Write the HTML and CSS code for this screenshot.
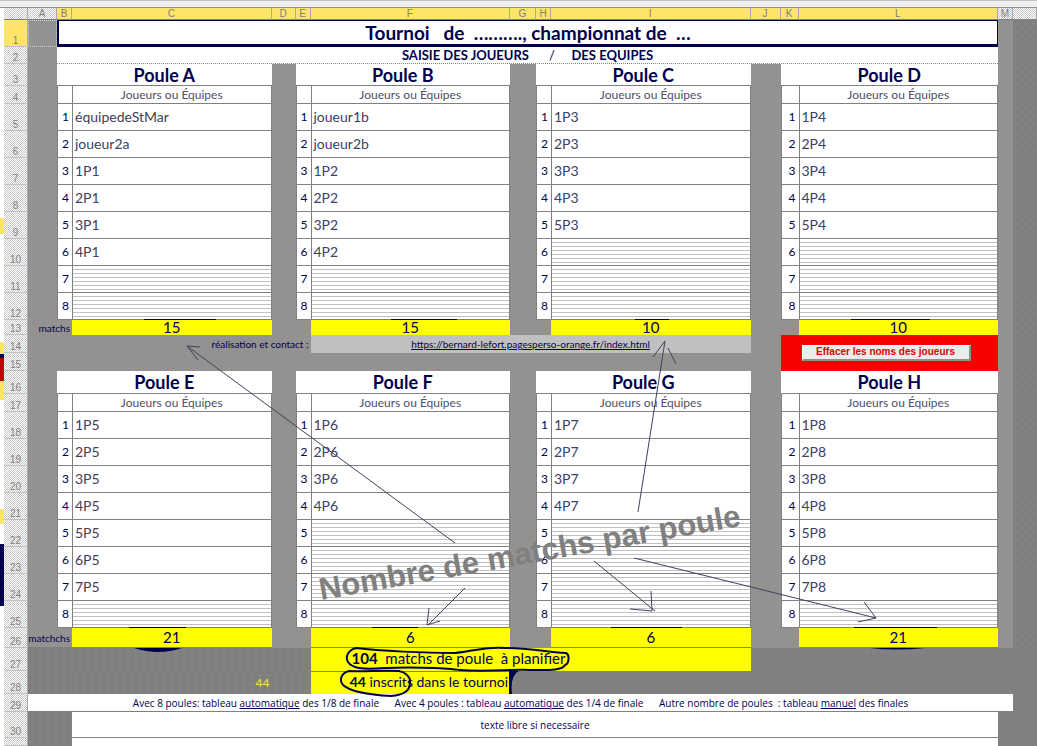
FILE: index.html
```html
<!DOCTYPE html>
<html lang="fr">
<head>
    <meta charset="UTF-8">
    <meta name="viewport" content="width=device-width, initial-scale=1.0">
    <title>Tournoi</title>
    <link rel="stylesheet" href="styles.css">
</head>
<body>
    <div class="page">
        <div class="ribbon"></div>
        <div class="window">
            <div class="edge"></div>
            <table class="sheet">
                <colgroup>
                    <col class="col-head">
                    <col class="col-a">
                    <col class="col-num"><col><col class="col-d">
                    <col class="col-num"><col><col class="col-g">
                    <col class="col-num"><col><col class="col-j">
                    <col class="col-k"><col>
                    <col class="col-m"><col class="col-n">
                </colgroup>
                <thead>
                    <tr class="letters">
                        <th></th><th>A</th>
                        <th class="on">B</th><th class="on">C</th><th class="on">D</th>
                        <th class="on">E</th><th class="on">F</th><th class="on">G</th>
                        <th class="on">H</th><th class="on">I</th><th class="on">J</th>
                        <th class="on">K</th><th class="on">L</th>
                        <th>M</th><th></th>
                    </tr>
                </thead>
                <tbody>
                    <tr class="row-title">
                        <th class="on">1</th><td class="copied"></td>
                        <td class="title" colspan="11">Tournoi   de  ………., championnat de  …</td>
                        <td></td><td class="outside"></td>
                    </tr>
                    <tr class="row-subtitle">
                        <th>2</th><td></td>
                        <td class="subtitle" colspan="11"><b>SAISIE DES JOUEURS</b>      /     <b>DES EQUIPES</b></td>
                        <td></td><td class="outside"></td>
                    </tr>
                </tbody>
                <tbody id="top"></tbody>
                <tbody>
                    <tr class="row-link">
                        <th>14</th><td></td><td></td>
                        <td class="label" colspan="3">réalisation et contact :</td>
                        <td class="link" colspan="4"><a href="https://bernard-lefort.pagesperso-orange.fr/index.html">https://bernard-lefort.pagesperso-orange.fr/index.html</a></td>
                        <td></td>
                        <td class="danger" colspan="2" rowspan="2"><button type="button" id="clear">Effacer les noms des joueurs</button></td>
                        <td></td><td class="outside"></td>
                    </tr>
                    <tr class="row-link">
                        <th>15</th><td colspan="10"></td>
                        <td></td><td class="outside"></td>
                    </tr>
                </tbody>
                <tbody id="bottom"></tbody>
                <tbody class="summary">
                    <tr class="row-total">
                        <th>27</th><td colspan="5"></td>
                        <td class="total planned" colspan="4"><b>104</b>  matchs de poule  à planifier</td>
                        <td colspan="5"></td>
                    </tr>
                    <tr class="row-total">
                        <th>28</th><td colspan="2"></td>
                        <td class="count">44</td><td colspan="2"></td>
                        <td class="total entered"><b>44</b> inscrits dans le tournoi</td>
                        <td colspan="8"></td>
                    </tr>
                    <tr class="row-help">
                        <th>29</th>
                        <td class="help" colspan="13">Avec 8 poules: tableau <u>automatique</u> des 1/8 de finale      Avec 4 poules : tableau <u>automatique</u> des 1/4 de finale      Autre nombre de poules  : tableau <u>manuel</u> des finales</td>
                        <td></td>
                    </tr>
                    <tr class="row-free">
                        <th>30</th><td colspan="2"></td>
                        <td class="help" colspan="10">texte libre si necessaire</td>
                        <td colspan="2"></td>
                    </tr>
                    <tr class="row-last">
                        <th></th><td colspan="2"></td><td class="blank" colspan="10"></td><td colspan="2"></td>
                    </tr>
                </tbody>
            </table>
        </div>

        <svg class="notes" viewBox="0 0 1037 746" preserveAspectRatio="xMinYMin meet">
            <text class="wordart" transform="translate(321 600) rotate(-10)">Nombre de matchs par poule</text>
            <g class="arrows">
                <path d="M455 543L187 346M200 347L187 346L198 360"/>
                <path d="M638 512L665 341L653 357M668 348L676 364"/>
                <path d="M465 588L428 625M429 608L427 625L440 621"/>
                <path d="M594 561L655 611M651 591L652 611L630 609"/>
                <path d="M634 558L876 618M864 602L876 618L858 622"/>
            </g>
            <g class="rings">
                <path d="M356 648C348 650 345 657 348 662C352 668 361 670 385 668C415 667 440 668 460 670C485 672 515 669 530 670C547 670 562 671 565 665C569 664 570 655 566 653C545 652 525 647 505 648C485 646 470 652 455 653C425 653 380 651 356 648Z"/>
                <path d="M349 671C341 673 339 680 343 685C351 692 372 695 391 696C404 695 410 690 410 683C411 677 405 672 399 671C382 670 363 672 349 671Z"/>
            </g>
            <g class="arcs">
                <path d="M144 319.500H216M391 319.500H457M635 319.500H669M851 319.500H930M129 627.500H186M372 627.500H418M611 627.500H682M854 627.500H937"/>
                <path class="dome" d="M134 648H182Q158 656 134 648ZM870 648H925Q895 651 870 648ZM509 671H519Q510 675 512 694H509Z"/>
            </g>
        </svg>
    </div>
    <script src="script.js"></script>
</body>
</html>
```

FILE: styles.css
```css
:root {
    --navy: #00004f;
    --line: #808080;
    --grey: #949290;
    --yellow: #ffff00;
    --head: #fee468;
}

body {
    margin: 0;
    background: #fff;
    color: var(--navy);
    font-family: Lato, "Open Sans", sans-serif;
}

.page {
    position: relative;
    overflow: hidden;
}

.ribbon {
    height: 4px;
    border-top: 1px solid #c0c0c0;
    border-bottom: 1px solid #909090;
    padding-bottom: 2px;
    background: #f0f0f0;
}

.window {
    display: flex;
}

/* sliver of the sheet behind */
.edge {
    flex: none;
    width: 4px;
    background: linear-gradient(#fff 210px, var(--head) 210px 226px, #fff 226px 334px,
        var(--head) 334px 346px, var(--navy) 346px 350px, #c00000 350px 373px,
        var(--head) 373px 392px, #fff 392px 501px, var(--head) 501px 516px, #fff 516px 536px,
        var(--navy) 536px 598px, #fff 598px);
}

.sheet {
    flex: 1;
    width: 0;
    table-layout: fixed;
    border-collapse: separate;
    border-spacing: 0;
    background: var(--grey);
}

.col-head, .col-d, .col-n { width: 24px; }
.col-a { width: 29px; }
.col-num, .col-m { width: 15px; }
.col-g { width: 26px; }
.col-j { width: 30px; }
.col-k { width: 18px; }

td, th {
    box-sizing: border-box;
    padding: 0;
    white-space: pre;
}

th {
    background: repeating-conic-gradient(#c8c8c8 0 25%, #fff 0 50%) 0 0 / 2px 2px;
    border-right: 1px solid #a8a8a8;
    border-bottom: 1px solid #c0c0c0;
    color: var(--line);
    font: 10px/10px "Liberation Sans", sans-serif;
    vertical-align: bottom;
}

th.on {
    background: var(--head);
}

.letters th {
    height: 12px;
    border-bottom-color: var(--line);
}

.outside,
.summary td {
    background: radial-gradient(#888 1px, transparent 1px) 0 0 / 8px 8px #808080;
}

.row-title { height: 27px; }
.row-subtitle { height: 17px; }
.row-name { height: 22px; }
.row-kind { height: 18px; }
.row-player { height: 27px; }
.row-matches { height: 15px; }
.row-link { height: 18px; }
#bottom .row-name { height: 23px; }
#bottom .row-matches { height: 20px; }
.row-total { height: 23px; }
.row-help { height: 18px; }
.row-free { height: 26px; }
.row-last { height: 8px; }

.copied {
    border: 1px dotted #d0d0d0;
}

.title {
    background: #fff;
    border: 1px solid var(--navy);
    border-left-width: 2px;
    border-bottom-width: 3px;
    font-size: 19px;
    line-height: 22px;
    font-weight: bold;
    text-align: center;
}

.subtitle {
    background: #fff;
    border-bottom: 1px dotted var(--line);
    font-size: 13px;
    line-height: 16px;
    text-align: center;
}

.name, .kind, .num, .player {
    background: #fff;
    border-bottom: 1px solid var(--line);
}

.name {
    font-size: 18px;
    line-height: 20px;
    font-weight: bold;
    text-align: center;
}

.kind, .num, .player {
    border-left: 1px solid var(--line);
}

.kind, .player {
    border-right: 1px solid var(--line);
}

.kind {
    color: #505068;
    font-size: 12px;
    line-height: 16px;
    text-align: center;
}

.num {
    padding-right: 3px;
    font-size: 12px;
    line-height: 16px;
    text-align: right;
}

.player {
    padding-left: 2px;
    color: #404060;
    font-size: 14px;
    line-height: 18px;
}

.empty {
    background: repeating-linear-gradient(#fff 0 3px, #c0c0c0 3px 4px);
}

.matches {
    background: var(--yellow);
    font-size: 15px;
    line-height: 15px;
    text-align: center;
}

#bottom .matches,
#bottom .row-matches .label {
    border-bottom: 1px solid var(--line);
}

.label {
    padding-right: 2px;
    font-size: 10px;
    line-height: 14px;
    text-align: right;
}

.link {
    background: #c0c0c0;
    font-size: 10px;
    line-height: 16px;
    text-align: center;
}

.link a {
    color: var(--navy);
}

.danger {
    padding: 0 0 1px 21px;
    background: #f80000;
}

.danger button {
    display: block;
    width: 169px;
    height: 16px;
    padding: 0;
    border: 1px solid #fff;
    border-right: 2px solid #909090;
    border-bottom: 2px solid #909090;
    background: #ececec;
    color: #e00000;
    font: bold 10px/12px "Liberation Sans", sans-serif;
}

.summary .total {
    background: var(--yellow);
    font-size: 15px;
    line-height: 18px;
}

.summary .planned {
    padding: 0 0 3px 41px;
}

.summary .entered {
    border-top: 1px solid var(--line);
    padding: 0 2px 3px 0;
    font-size: 14px;
    text-align: right;
}

.summary .count {
    padding-right: 2px;
    color: #f0e050;
    font-size: 12px;
    line-height: 18px;
    text-align: right;
}

.summary .help {
    background: #fff;
    border-bottom: 1px solid var(--line);
    font-family: "Open Sans", sans-serif;
    font-size: 10px;
    line-height: 16px;
    text-align: center;
}

.summary .blank {
    background: #fff;
}

.notes {
    position: absolute;
    top: 0;
    left: 0;
    width: 100%;
    pointer-events: none;
}

.wordart {
    fill: #808080;
    font: bold 31px "Liberation Sans Narrow", "Liberation Sans", sans-serif;
}

.arrows path {
    fill: none;
    stroke: #40405c;
    stroke-width: 1;
}

.rings path {
    fill: none;
    stroke: var(--navy);
    stroke-width: 2;
}

.arcs path {
    fill: none;
    stroke: var(--navy);
}

.arcs .dome {
    fill: var(--navy);
    stroke: none;
}
```

FILE: script.js
```js
const SLOTS = 8;

const topPoules = [
    { name: 'Poule A', matches: 15, players: ['équipedeStMar', 'joueur2a', '1P1', '2P1', '3P1', '4P1'] },
    { name: 'Poule B', matches: 15, players: ['joueur1b', 'joueur2b', '1P2', '2P2', '3P2', '4P2'] },
    { name: 'Poule C', matches: 10, players: ['1P3', '2P3', '3P3', '4P3', '5P3'] },
    { name: 'Poule D', matches: 10, players: ['1P4', '2P4', '3P4', '4P4', '5P4'] }
];

const bottomPoules = [
    { name: 'Poule E', matches: 21, players: ['1P5', '2P5', '3P5', '4P5', '5P5', '6P5', '7P5'] },
    { name: 'Poule F', matches: 6, players: ['1P6', '2P6', '3P6', '4P6'] },
    { name: 'Poule G', matches: 6, players: ['1P7', '2P7', '3P7', '4P7'] },
    { name: 'Poule H', matches: 21, players: ['1P8', '2P8', '3P8', '4P8', '5P8', '6P8', '7P8'] }
];

function row(type, number, first, cells) {
    return `<tr class="${type}"><th>${number}</th>${first}${cells.join('<td></td>')}<td></td><td class="outside"></td></tr>`;
}

function drawPoules(id, poules, start, label) {
    const rows = [];
    rows.push(row('row-name', start, '<td></td>', poules.map(p => `<td class="name" colspan="2">${p.name}</td>`)));
    rows.push(row('row-kind', start + 1, '<td></td>', poules.map(() => '<td class="num"></td><td class="kind">Joueurs ou Équipes</td>')));
    for (let i = 0; i < SLOTS; i++) {
        rows.push(row('row-player', start + 2 + i, '<td></td>', poules.map(p => {
            const player = p.players[i];
            return `<td class="num">${i + 1}</td><td class="player${player ? '' : ' empty'}">${player || ''}</td>`;
        })));
    }
    // the label runs over columns A and B
    rows.push(row('row-matches', start + 10, `<td class="label" colspan="2">${label}</td>`,
        poules.map((p, i) => `${i ? '<td></td>' : ''}<td class="matches">${p.matches}</td>`)));
    document.getElementById(id).innerHTML = rows.join('');
}

drawPoules('top', topPoules, 3, 'matchs');
drawPoules('bottom', bottomPoules, 16, 'matchchs');

document.getElementById('clear').addEventListener('click', () => {
    document.querySelectorAll('.player').forEach(cell => {
        cell.textContent = '';
        cell.classList.add('empty');
    });
});
```
